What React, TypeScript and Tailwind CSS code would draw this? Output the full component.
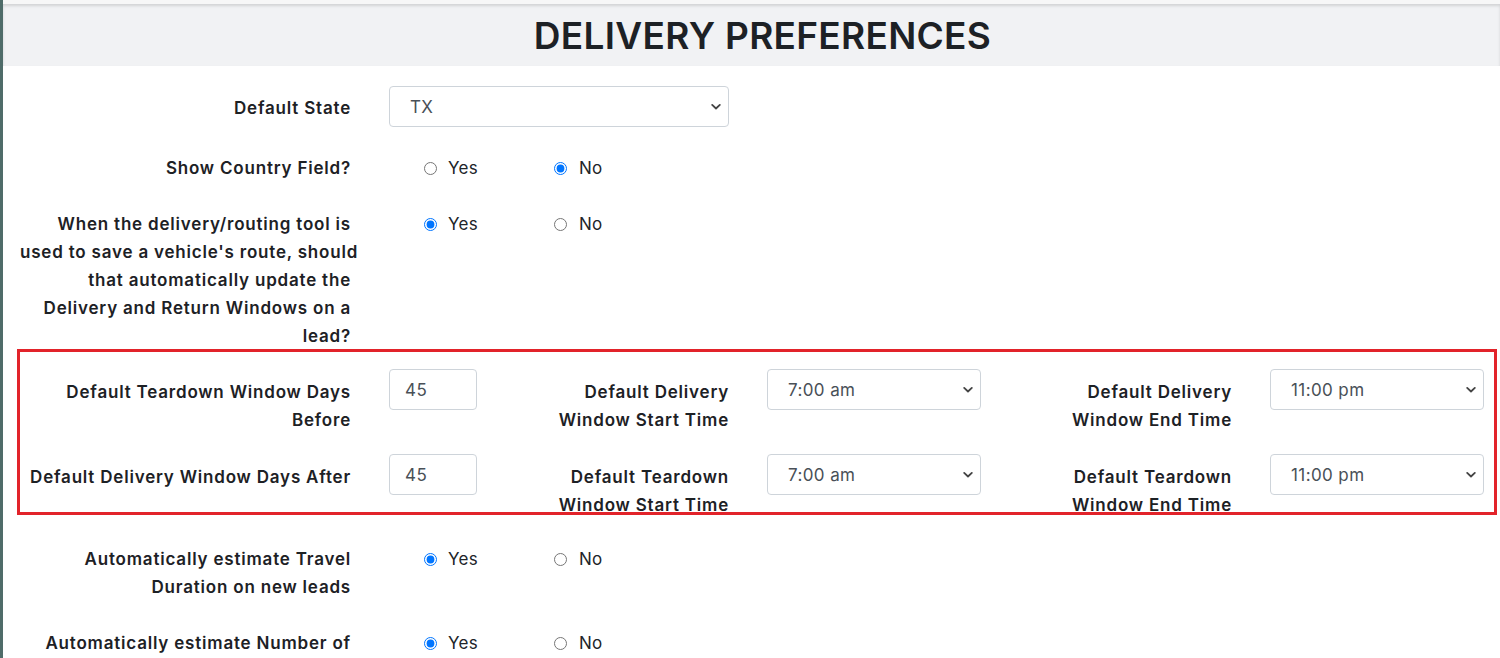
import React from "react";

const FONT = { fontFamily: "Inter, 'Liberation Sans', sans-serif" };

function Chevron() {
  return (
    <svg
      className="pointer-events-none absolute right-[8px] top-1/2 -translate-y-1/2"
      width="10"
      height="7"
      viewBox="0 0 10 7"
      fill="none"
    >
      <path d="M1.2 1.4 L5 5 L8.8 1.4" stroke="#444" strokeWidth="1.8" strokeLinecap="round" strokeLinejoin="round" />
    </svg>
  );
}

function Select({ value, options, w }: { value: string; options: string[]; w: string }) {
  return (
    <div className={`relative ${w} h-[41px]`}>
      <select
        defaultValue={value}
        className="h-full w-full appearance-none rounded-[4px] border border-[#ced4da] bg-white pl-[20px] pr-[28px] pt-[2px] text-[17px] tracking-[0.4px] text-[#495057] outline-none"
        style={FONT}
      >
        {options.map((o) => (
          <option key={o}>{o}</option>
        ))}
      </select>
      <Chevron />
    </div>
  );
}

function NumInput({ value }: { value: string }) {
  return (
    <input
      defaultValue={value}
      className="h-[41px] w-[88px] rounded-[4px] border border-[#ced4da] bg-white pl-[15px] pt-[1px] text-[17px] tracking-[0.4px] text-[#495057] outline-none"
      style={FONT}
    />
  );
}

function Label({ children, w }: { children: React.ReactNode; w: string }) {
  return (
    <div className={`${w} shrink-0 whitespace-nowrap pt-[8px] text-right text-[17px] font-semibold leading-[28px] tracking-[0.8px] text-[#1d2125]`}>
      {children}
    </div>
  );
}

function Radios({ name, yes }: { name: string; yes: boolean }) {
  return (
    <div className="ml-[73px] mt-[8px] flex h-[28px] items-center text-[17px] tracking-[0.3px] text-[#212529]">
      <label className="flex w-[130px] items-center">
        <input type="radio" name={name} defaultChecked={yes} className="m-0 h-[13px] w-[13px]" />
        <span className="ml-[11px] pt-[2px]">Yes</span>
      </label>
      <label className="flex items-center">
        <input type="radio" name={name} defaultChecked={!yes} className="m-0 h-[13px] w-[13px]" />
        <span className="ml-[12px] pt-[2px]">No</span>
      </label>
    </div>
  );
}

const times = ["6:00 am", "7:00 am", "8:00 am", "9:00 am", "10:00 pm", "11:00 pm"];

export default function App() {
  return (
    <div className="flex min-h-[658px] bg-white" style={FONT}>
      <div className="w-[3px] shrink-0 bg-[#4f6c69]" />
      <div className="flex-1">
        <div className="h-[4px] bg-[#f7f7f7]" />
        <div className="flex h-[62px] items-center justify-center bg-[#f1f2f4] pl-[22px] shadow-[inset_0_2px_3px_rgba(0,0,0,0.13)]">
          <h1 className="text-[37px] font-semibold leading-none tracking-[0.3px] text-[#1d2125]">DELIVERY PREFERENCES</h1>
        </div>

        <div className="ml-[14px] w-[1480px] pt-[20px]">
          {/* Default State */}
          <div className="mb-[19px] flex items-start px-[3px]">
            <Label w="w-[331px]">Default State</Label>
            <div className="ml-[38px]">
              <Select value="TX" options={["TX", "OK", "LA", "NM"]} w="w-[340px]" />
            </div>
          </div>

          {/* Show Country */}
          <div className="mb-[20px] flex items-start px-[3px]">
            <Label w="w-[331px]">Show Country Field?</Label>
            <Radios name="country" yes={false} />
          </div>

          {/* Routing tool */}
          <div className="-mb-[1px] flex items-start px-[3px]">
            <Label w="w-[331px]">
              When the delivery/routing tool is
              <br />
              used to save a vehicle's route, should
              <br />
              that automatically update the
              <br />
              Delivery and Return Windows on a
              <br />
              lead?
            </Label>
            <Radios name="routing" yes={true} />
          </div>

          {/* Highlighted box */}
          <div className="h-[166px] border-[3px] border-[#e2232a] pt-[17px]">
            <div className="mb-[20px] flex items-start">
              <div className="w-[331px] shrink-0 whitespace-nowrap pt-[9px] text-right text-[17px] font-semibold leading-[28px] tracking-[0.8px] text-[#1d2125]">
                Default Teardown Window Days
                <br />
                Before
              </div>
              <div className="ml-[38px]">
                <NumInput value="45" />
              </div>
              <div className="w-[252px] shrink-0 whitespace-nowrap pt-[9px] text-right text-[17px] font-semibold leading-[28px] tracking-[0.8px] text-[#1d2125]">
                Default Delivery
                <br />
                Window Start Time
              </div>
              <div className="ml-[38px]">
                <Select value="7:00 am" options={times} w="w-[214px]" />
              </div>
              <div className="w-[251px] shrink-0 whitespace-nowrap pt-[9px] text-right text-[17px] font-semibold leading-[28px] tracking-[0.8px] text-[#1d2125]">
                Default Delivery
                <br />
                Window End Time
              </div>
              <div className="ml-[38px]">
                <Select value="11:00 pm" options={times} w="w-[214px]" />
              </div>
            </div>
            <div className="flex items-start">
              <div className="w-[331px] shrink-0 whitespace-nowrap pt-[9px] text-right text-[17px] font-semibold leading-[28px] tracking-[0.8px] text-[#1d2125]">
                Default Delivery Window Days After
              </div>
              <div className="ml-[38px]">
                <NumInput value="45" />
              </div>
              <div className="w-[252px] shrink-0 whitespace-nowrap pt-[9px] text-right text-[17px] font-semibold leading-[28px] tracking-[0.8px] text-[#1d2125]">
                Default Teardown
                <br />
                Window Start Time
              </div>
              <div className="ml-[38px]">
                <Select value="7:00 am" options={times} w="w-[214px]" />
              </div>
              <div className="w-[251px] shrink-0 whitespace-nowrap pt-[9px] text-right text-[17px] font-semibold leading-[28px] tracking-[0.8px] text-[#1d2125]">
                Default Teardown
                <br />
                Window End Time
              </div>
              <div className="ml-[38px]">
                <Select value="11:00 pm" options={times} w="w-[214px]" />
              </div>
            </div>
          </div>

          {/* Travel duration */}
          <div className="mb-[20px] mt-[22px] flex items-start px-[3px]">
            <Label w="w-[331px]">
              Automatically estimate Travel
              <br />
              Duration on new leads
            </Label>
            <Radios name="travel" yes={true} />
          </div>

          <div className="mb-[21px] flex items-start px-[3px]">
            <Label w="w-[331px]">
              Automatically estimate Number of
              <br />
              Crew Members on new leads
            </Label>
            <Radios name="crew" yes={true} />
          </div>
        </div>
      </div>
    </div>
  );
}
